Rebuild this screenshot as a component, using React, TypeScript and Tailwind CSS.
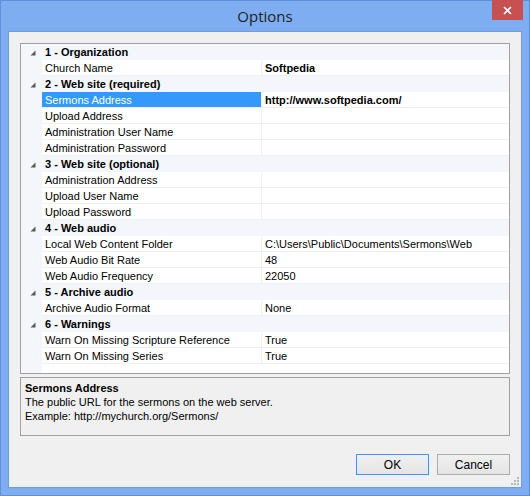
import React from 'react';

type Prop = { label: string; value?: string; bold?: boolean; selected?: boolean };
type Category = { title: string; items: Prop[] };

const categories: Category[] = [
  { title: '1 - Organization', items: [{ label: 'Church Name', value: 'Softpedia', bold: true }] },
  {
    title: '2 - Web site (required)',
    items: [
      { label: 'Sermons Address', value: 'http://www.softpedia.com/', bold: true, selected: true },
      { label: 'Upload Address' },
      { label: 'Administration User Name' },
      { label: 'Administration Password' },
    ],
  },
  {
    title: '3 - Web site (optional)',
    items: [
      { label: 'Administration Address' },
      { label: 'Upload User Name' },
      { label: 'Upload Password' },
    ],
  },
  {
    title: '4 - Web audio',
    items: [
      { label: 'Local Web Content Folder', value: 'C:\\Users\\Public\\Documents\\Sermons\\Web' },
      { label: 'Web Audio Bit Rate', value: '48' },
      { label: 'Web Audio Frequency', value: '22050' },
    ],
  },
  { title: '5 - Archive audio', items: [{ label: 'Archive Audio Format', value: 'None' }] },
  {
    title: '6 - Warnings',
    items: [
      { label: 'Warn On Missing Scripture Reference', value: 'True' },
      { label: 'Warn On Missing Series', value: 'True' },
    ],
  },
];

function Expanded() {
  // small filled "expanded" glyph used by the Windows 8 tree
  return (
    <svg width="6" height="6" viewBox="0 0 6 6" className="block">
      <path d="M5.5 0.5 L5.5 5.5 L0.5 5.5 Z" fill="#595959" />
    </svg>
  );
}

function CategoryRow({ title }: { title: string }) {
  return (
    <div className="flex h-4 bg-[#f3f6fb]">
      <div className="w-[21px] flex items-center justify-center pl-[2px] pt-[2px]">
        <Expanded />
      </div>
      <div className="flex-1 pl-[3px] pt-px font-bold leading-[15px] text-black">{title}</div>
    </div>
  );
}

function PropRow({ item }: { item: Prop }) {
  return (
    <div className="flex h-4">
      <div className="w-[21px] bg-[#f3f6fb]" />
      <div
        className={`w-[219px] pl-[3px] pt-px leading-[14px] border-b border-[#f0f0f0] ${
          item.selected ? 'bg-[#3399ff] text-white border-[#3399ff]' : 'bg-white text-black'
        }`}
      >
        {item.label}
      </div>
      <div className="w-px bg-[#f0f0f0]" />
      <div
        className={`flex-1 pl-[3px] pt-px leading-[14px] bg-white border-b border-[#f0f0f0] text-black whitespace-nowrap overflow-hidden ${
          item.bold ? 'font-bold' : ''
        }`}
      >
        {item.value}
      </div>
    </div>
  );
}

function Button({ label, focused }: { label: string; focused?: boolean }) {
  return (
    <button
      className={`w-[73px] h-[21px] text-[12px] text-black border bg-gradient-to-b from-[#f0f0f0] to-[#e5e5e5] ${
        focused ? 'border-[#3399ff]' : 'border-[#acacac]'
      }`}
    >
      {label}
    </button>
  );
}

export default function App() {
  return (
    <div
      className="w-[530px] h-[496px] bg-[#7eaef1] border border-[#5e8fd8] flex flex-col"
      style={{ fontFamily: '"Liberation Sans", Arial, sans-serif' }}
    >
      {/* title bar */}
      <div className="h-[30px] flex relative">
        <div className="flex-1 text-center pt-[4px] text-[15px] text-[#1e1e1e]" style={{ fontFamily: '"Open Sans", sans-serif' }}>
          Options
        </div>
        <div className="absolute right-[6px] top-[-1px] w-[31px] h-[20px] bg-[#c75050] flex items-center justify-center">
          <svg width="9" height="9" viewBox="0 0 9 9">
            <path d="M1 1 L8 8 M8 1 L1 8" stroke="white" strokeWidth="1.6" />
          </svg>
        </div>
      </div>

      {/* client area */}
      <div className="mx-[7px] mb-[7px] flex-1 bg-[#f0f0f0] border border-[#6f9de0] flex flex-col px-[11px] pt-[11px] text-[11px] relative">
        <div className="h-[331px] border border-[#a0a0a0] bg-white flex flex-col">
          {categories.map((c) => (
            <React.Fragment key={c.title}>
              <CategoryRow title={c.title} />
              {c.items.map((it) => (
                <PropRow key={it.label} item={it} />
              ))}
            </React.Fragment>
          ))}
          <div className="flex flex-1">
            <div className="w-[21px] bg-[#f3f6fb]" />
            <div className="flex-1 bg-white" />
          </div>
        </div>

        <div className="mt-[3px] h-[59px] border border-[#a0a0a0] bg-[#f0f0f0] px-[4px] pt-[3px] leading-[14px] text-black">
          <div className="font-bold">Sermons Address</div>
          <div>The public URL for the sermons on the web server.</div>
          <div>Example: http://mychurch.org/Sermons/</div>
        </div>

        <div className="flex justify-end gap-[8px] mt-[18px] pr-0">
          <Button label="OK" focused />
          <Button label="Cancel" />
        </div>

        <div className="absolute right-[2px] bottom-[2px]">
          <svg width="8" height="8" viewBox="0 0 8 8">
            <rect x="6" y="0" width="2" height="2" fill="#b8b8b8" />
            <rect x="3" y="3" width="2" height="2" fill="#b8b8b8" />
            <rect x="6" y="3" width="2" height="2" fill="#b8b8b8" />
            <rect x="0" y="6" width="2" height="2" fill="#b8b8b8" />
            <rect x="3" y="6" width="2" height="2" fill="#b8b8b8" />
            <rect x="6" y="6" width="2" height="2" fill="#b8b8b8" />
          </svg>
        </div>
      </div>
    </div>
  );
}
